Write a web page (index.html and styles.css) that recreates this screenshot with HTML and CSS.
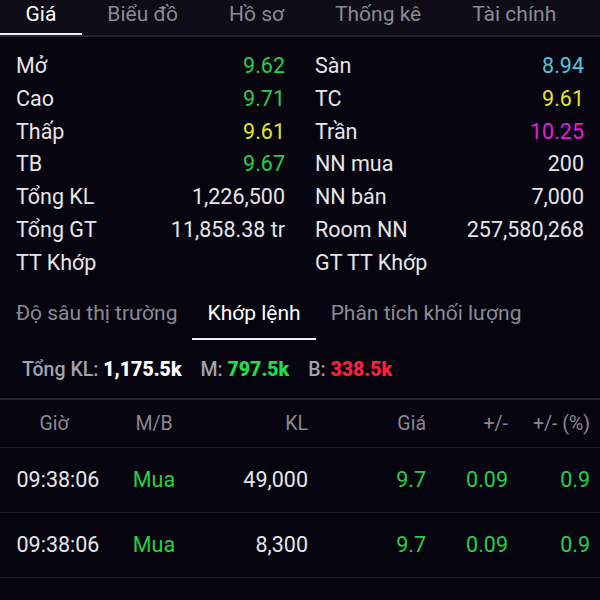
FILE: index.html
```html
<!DOCTYPE html>
<html lang="vi">
<head>
  <meta charset="UTF-8" />
  <meta name="viewport" content="width=device-width, initial-scale=1.0"/>
  <title>Giá</title>
  <link rel="stylesheet" href="styles.css">
</head>
<body>

<div class="tabs">
  <div class="tab active">Giá</div>
  <div class="tab">Biểu đồ</div>
  <div class="tab">Hồ sơ</div>
  <div class="tab">Thống kê</div>
  <div class="tab">Tài chính</div>
</div>

<div class="info">
  <div class="col left">
    <div class="row"><span>Mở</span><span class="up">9.62</span></div>
    <div class="row"><span>Cao</span><span class="up">9.71</span></div>
    <div class="row"><span>Thấp</span><span class="ref">9.61</span></div>
    <div class="row"><span>TB</span><span class="up">9.67</span></div>
    <div class="row"><span>Tổng KL</span><span>1,226,500</span></div>
    <div class="row"><span>Tổng GT</span><span>11,858.38 tr</span></div>
    <div class="row"><span>TT Khớp</span><span></span></div>
  </div>
  <div class="col right">
    <div class="row"><span>Sàn</span><span class="floor">8.94</span></div>
    <div class="row"><span>TC</span><span class="ref">9.61</span></div>
    <div class="row"><span>Trần</span><span class="ceil">10.25</span></div>
    <div class="row"><span>NN mua</span><span>200</span></div>
    <div class="row"><span>NN bán</span><span>7,000</span></div>
    <div class="row"><span>Room NN</span><span>257,580,268</span></div>
    <div class="row"><span>GT TT Khớp</span><span></span></div>
  </div>
</div>

<div class="subtabs">
  <div class="subtab">Độ sâu thị trường</div>
  <div class="subtab active">Khớp lệnh</div>
  <div class="subtab">Phân tích khối lượng</div>
</div>

<div class="summary">
  <span class="lbl">Tổng KL:</span> <b>1,175.5k</b>
  <span class="lbl gap">M:</span> <b class="buy">797.5k</b>
  <span class="lbl gap">B:</span> <b class="sell">338.5k</b>
</div>

<div class="trades">
  <div class="trade head">
    <span class="c">Giờ</span>
    <span class="c">M/B</span>
    <span>KL</span>
    <span>Giá</span>
    <span>+/-</span>
    <span>+/- (%)</span>
  </div>
  <div class="trade">
    <span class="c">09:38:06</span>
    <span class="c up">Mua</span>
    <span>49,000</span>
    <span class="up">9.7</span>
    <span class="up">0.09</span>
    <span class="up">0.9</span>
  </div>
  <div class="trade">
    <span class="c">09:38:06</span>
    <span class="c up">Mua</span>
    <span>8,300</span>
    <span class="up">9.7</span>
    <span class="up">0.09</span>
    <span class="up">0.9</span>
  </div>
  <div class="trade">
    <span class="c">09:38:04</span>
    <span class="c up">Mua</span>
    <span>1,000</span>
    <span class="up">9.7</span>
    <span class="up">0.09</span>
    <span class="up">0.9</span>
  </div>
</div>

</body>
</html>
```

FILE: styles.css
```css
body {
  margin: 0;
  background: #06050f;
  color: #e6e6ea;
  font-family: Roboto, "Noto Sans", sans-serif;
  overflow: hidden;
}
.tabs {
  display: flex;
  background: #0e0c18;
  border-bottom: 2px solid #262430;
}
.tab {
  padding: 0 25.5px 5px;
  line-height: 28px;
  font-size: 21px;
  color: #8c8a95;
  border-bottom: 2px solid transparent;
  white-space: nowrap;
}
.tab.active {
  color: #fff;
  border-bottom-color: #f2f2f2;
}
.info {
  display: grid;
  grid-template-columns: 1fr 1fr;
  padding-top: 13px;
}
.col.left {
  padding: 0 15px 0 16px;
}
.col.right {
  padding: 0 16px 0 15px;
}
.row {
  display: flex;
  justify-content: space-between;
  font-size: 21.5px;
  line-height: 32.8px;
  height: 32.8px;
}
.up { color: #27cf48; }
.ref { color: #e6e320; }
.floor { color: #55c4dc; }
.ceil { color: #e020dc; }
.subtabs {
  display: flex;
  margin-top: 20px;
}
.subtab {
  padding: 0 15px 12px;
  line-height: 26px;
  font-size: 21px;
  color: #8c8a95;
  border-bottom: 2px solid transparent;
  white-space: nowrap;
}
.subtab:first-child {
  padding-left: 16px;
}
.subtab.active {
  color: #fff;
  border-bottom-color: #f2f2f2;
}
.summary {
  padding: 17px 22px 15px;
  line-height: 26px;
  font-size: 19.5px;
  font-weight: 700;
  border-bottom: 2px solid #262430;
  color: #fff;
  white-space: nowrap;
}
.summary .lbl {
  color: #a3a2aa;
  font-weight: 500;
}
.summary .gap {
  margin-left: 14px;
}
.summary .buy { color: #1fdc48; }
.summary .sell { color: #ff1e3c; }
.trades {
  font-size: 21.5px;
}
.trade {
  display: grid;
  grid-template-columns: 116px 76px 116px 118px 82px 82px;
  height: 64px;
  align-items: center;
  border-bottom: 1px solid #1c1a27;
}
.trade span {
  text-align: right;
}
.trade .c {
  text-align: center;
}
.trade.head {
  height: 47px;
  font-size: 19.5px;
  color: #8a8893;
}
.trade.head span:first-child {
  padding-right: 8px;
}
```
